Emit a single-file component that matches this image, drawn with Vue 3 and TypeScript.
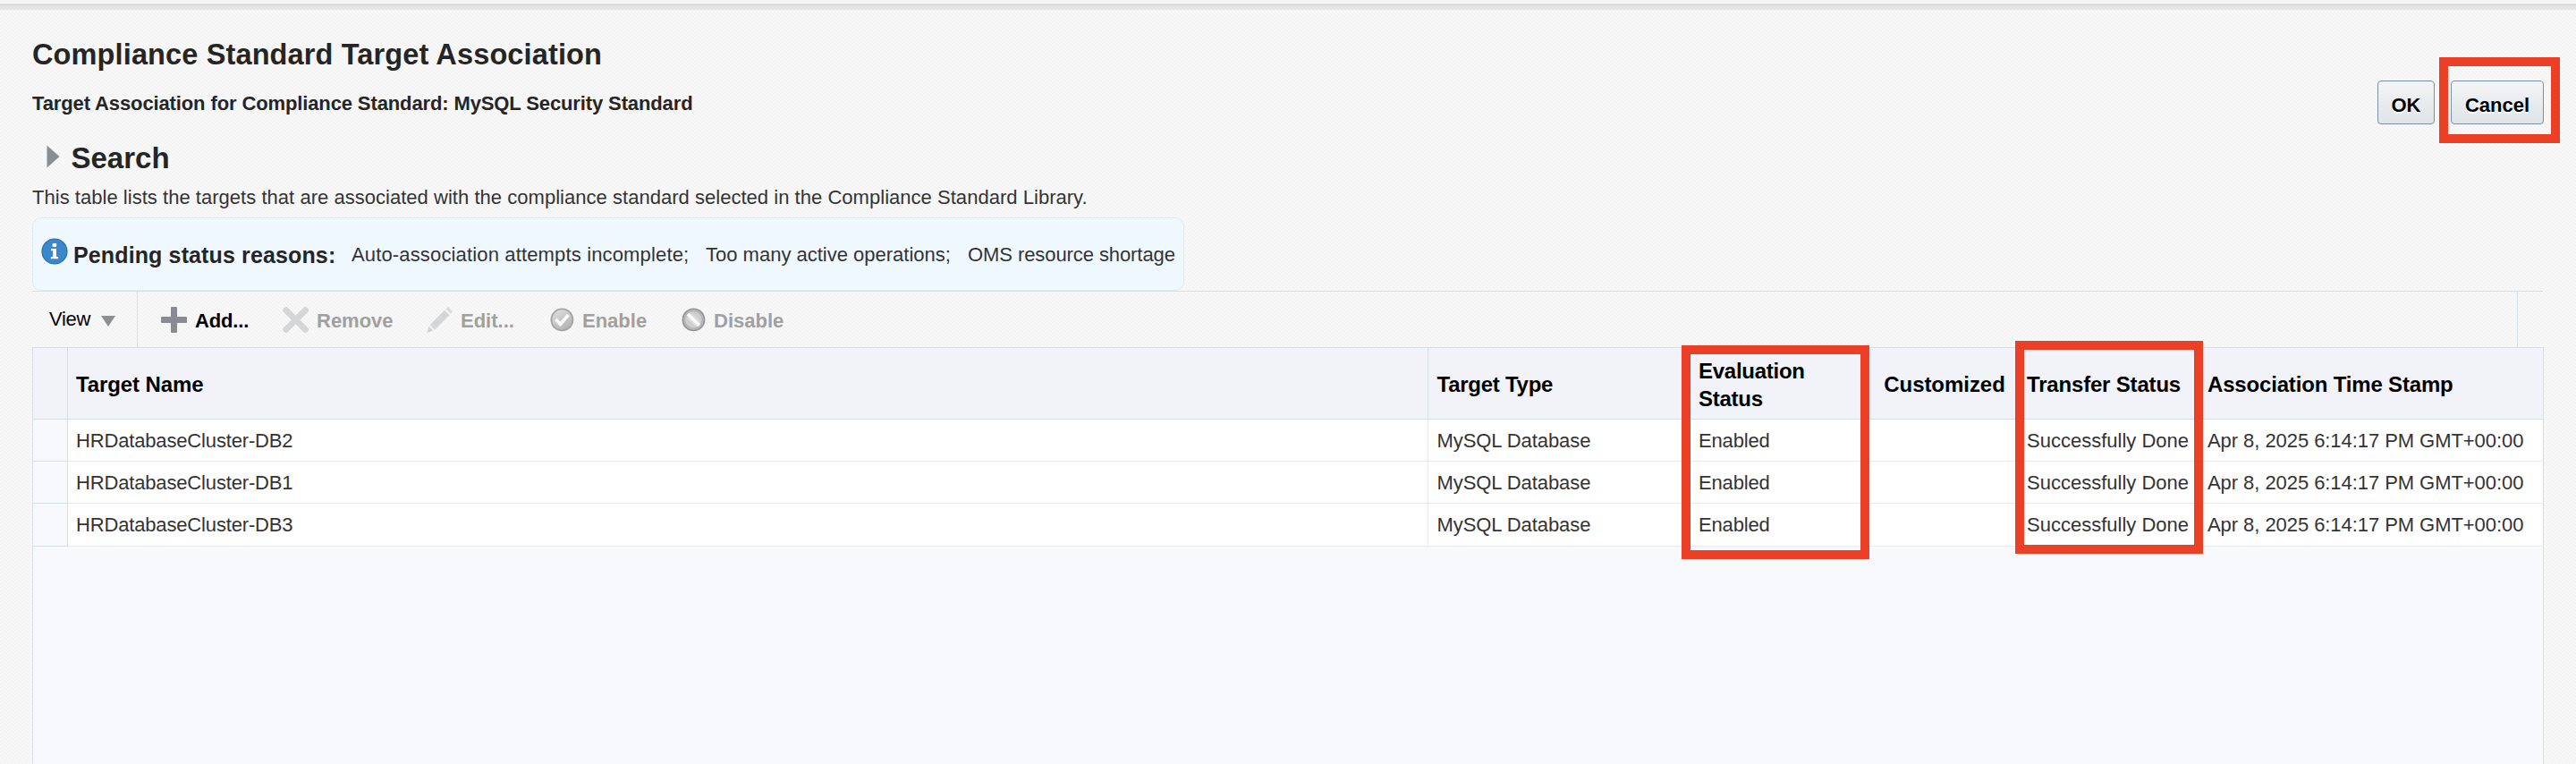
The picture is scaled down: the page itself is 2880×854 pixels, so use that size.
<script setup lang="ts">
interface Row { name: string; type: string; evaluation: string; transfer: string; stamp: string }
const stamp = 'Apr 8, 2025 6:14:17 PM GMT+00:00'
const rows: Row[] = ['DB2', 'DB1', 'DB3'].map((db) => ({
  name: `HRDatabaseCluster-${db}`,
  type: 'MySQL Database',
  evaluation: 'Enabled',
  transfer: 'Successfully Done',
  stamp,
}))
</script>

<template>
  <div class="page">
    <div class="top-edge"></div>
    <header class="head">
      <div class="titles">
        <h1 class="title">Compliance Standard Target Association</h1>
        <p class="subtitle">Target Association for Compliance Standard: MySQL Security Standard</p>
      </div>
      <div class="buttons">
        <button class="btn ok">OK</button>
        <button class="btn cancel">Cancel<span class="mark mark-cancel"></span></button>
      </div>
    </header>
    <div class="search">
      <svg class="disclose" width="15" height="26" viewBox="0 0 15 26"><path d="M0.5 0.5 14.5 13 0.5 25.5Z" fill="#8b8e91" /></svg>
      <h2 class="search-title">Search</h2>
    </div>
    <p class="intro">This table lists the targets that are associated with the compliance standard selected in the Compliance Standard Library.</p>
    <div class="notice">
      <svg class="info" width="30" height="30" viewBox="0 0 30 30">
        <circle cx="15" cy="15" r="14.6" fill="#2c6fa8" />
        <circle cx="15" cy="15" r="13.4" fill="#3a87cb" />
        <rect x="12.6" y="6" width="4.6" height="4" rx="1" fill="#fff" />
        <path d="M11 12h6v9h2.2v2.2h-8.4V21h2.3v-6.8H11z" fill="#fff" />
      </svg>
      <strong class="notice-label">Pending status reasons:</strong>
      <span class="reason r1">Auto-association attempts incomplete;</span>
      <span class="reason r2">Too many active operations;</span>
      <span class="reason r3">OMS resource shortage</span>
    </div>
    <div class="toolbar">
      <div class="view">
        <span class="view-text">View</span>
        <svg class="caret" width="16" height="12" viewBox="0 0 16 12"><path d="M0 0H16L8 12Z" fill="#8d9093" /></svg>
      </div>
      <div class="tools">
        <div class="tool add">
          <svg width="30" height="30" viewBox="0 0 30 30">
            <rect x="11" y="0" width="7" height="29" rx="1" fill="#888b8f" />
            <rect x="0" y="11" width="29" height="7" rx="1" fill="#888b8f" />
          </svg>
          <span>Add...</span>
        </div>
        <div class="tool off remove">
          <svg width="30" height="30" viewBox="0 0 30 30"><path d="M3.800 3.800 25.400 25.400M25.400 3.800 3.800 25.400" stroke="#d5d6d8" stroke-width="7" stroke-linecap="round" /></svg>
          <span>Remove</span>
        </div>
        <div class="tool off edit">
          <svg width="30" height="30" viewBox="0 0 30 30"><path d="M20 3.700 25.500 9.200 9 25.700 3.500 20.200Z" fill="#d5d6d8" /><path d="M21.500 2.300 23.200 .5Q24 0 25 .8L28.400 4.200Q29.200 5 28.500 5.900L26.800 7.800Z" fill="#dcdddf" /><path d="M2.500 21.700 7.300 26.600 .3 28.900Z" fill="#d2d3d5" /></svg>
          <span>Edit...</span>
        </div>
        <div class="tool off enable">
          <svg width="28" height="28" viewBox="0 0 28 28">
            <defs><linearGradient id="ball" x1="0" y1="0" x2="0.6" y2="1"><stop offset="0" stop-color="#e2e2e2" /><stop offset="1" stop-color="#b4b4b4" /></linearGradient></defs>
            <circle cx="14.400" cy="14.400" r="12" fill="url(#ball)" stroke="#a3a3a3" stroke-width="1.800" />
            <path d="M7.500 14 12.500 19.500 21.500 9" fill="none" stroke="#fafafa" stroke-width="3.600" />
          </svg>
          <span>Enable</span>
        </div>
        <div class="tool off disable">
          <svg width="28" height="28" viewBox="0 0 28 28">
            <circle cx="14.400" cy="14.400" r="12" fill="#cfcfcf" stroke="#949494" stroke-width="1.900" />
            <circle cx="14.400" cy="14.400" r="10" fill="none" stroke="#b4b4b4" stroke-width="1.800" />
            <path d="M8 8 20.800 20.800" stroke="#fafafa" stroke-width="4" />
            <path d="M12.500 8 20.800 16.300M8 12.500 16.300 20.800" stroke="#dedede" stroke-width="1.500" />
          </svg>
          <span>Disable</span>
        </div>
      </div>
      <div class="tool-end"></div>
    </div>
    <div class="grid">
      <div class="row header">
        <div class="gutter"></div>
        <div class="cell name">Target Name</div>
        <div class="cell type">Target Type</div>
        <div class="cell eval"><span>Evaluation<br />Status</span></div>
        <div class="cell center">Customized</div>
        <div class="cell transfer">Transfer Status</div>
        <div class="cell last">Association Time Stamp</div>
      </div>
      <div v-for="row in rows" :key="row.name" class="row body">
        <div class="gutter"></div>
        <div class="cell name">{{ row.name }}</div>
        <div class="cell type">{{ row.type }}</div>
        <div class="cell eval">{{ row.evaluation }}</div>
        <div class="cell"></div>
        <div class="cell transfer">{{ row.transfer }}</div>
        <div class="cell last">{{ row.stamp }}</div>
      </div>
      <span class="mark mark-eval"></span>
      <span class="mark mark-transfer"></span>
    </div>
  </div>
</template>

<style>
html, body { margin: 0; overflow: hidden; }
</style>

<style scoped>
* { box-sizing: border-box; }
.page {
  width: 2880px; height: 854px; overflow: hidden;
  display: flex; flex-direction: column;
  font: 22px/26px "Liberation Sans", Arial, sans-serif; color: #333; white-space: nowrap;
  background: repeating-linear-gradient(45deg, #f9f9f9 0 1.414px, #f3f3f3 1.414px 2.828px);
}
h1, h2, p { margin: 0; font-size: inherit; }
.top-edge { height: 11px; flex: none; border-top: 3px solid #f2f2f2; background: linear-gradient(#fff 0 1px, #d9d9d9 1px, #e9e9e9 100%); }
.head { height: 136px; flex: none; display: flex; justify-content: space-between; padding: 0 36px; color: #252525; }
.title { font-size: 32.5px; line-height: 36px; margin-top: 32px; letter-spacing: .13px; }
.subtitle { font-weight: bold; line-height: 26px; margin-top: 24px; letter-spacing: -.12px; }
.buttons { display: flex; gap: 18px; margin-top: 79px; }
.btn {
  position: relative; height: 49px; padding: 6px 0 0; border: 1px solid #7a8fa6; border-radius: 4px;
  background: linear-gradient(#f3f4f5, #dfe4e8); font: bold 22px/26px "Liberation Sans", Arial, sans-serif;
  color: #000; text-shadow: 0 2px 0 #fff; text-align: center;
}
.ok { width: 64px; }
.cancel { width: 104px; }
.mark { position: absolute; border: 10px solid #ec4026; pointer-events: none; }
.mark-cancel { left: -14px; top: -27px; width: 135px; height: 96px; }
.search { height: 58px; flex: none; display: flex; padding: 15px 0 0 52px; }
.search-title { font-size: 33px; line-height: 36px; margin: -3px 0 0 12.5px; color: #252525; }
.intro { height: 38px; flex: none; padding: 3px 0 0 36px; letter-spacing: .03px; }
.notice {
  margin-left: 36px; width: 1288px; height: 82px; flex: none; display: flex; align-items: flex-start;
  border: 1px solid #dfeaf0; border-radius: 10px; background: #f0f8ff; padding-left: 9px;
}
.info { margin-top: 22px; flex: none; }
.notice-label { font-size: 25px; line-height: 28px; color: #252525; margin: 27px 0 0 6px; width: 311px; flex: none; letter-spacing: .13px; }
.reason { margin-top: 28px; flex: none; }
.r1 { width: 396px; letter-spacing: .15px; }
.r2 { width: 293px; }
.r3 { letter-spacing: -.08px; }
.toolbar { margin: 0 37px 0 36px; height: 63px; flex: none; border-top: 1px solid #d6dfe6; display: flex; }
.view { width: 118px; border-right: 1px solid #d6dfe6; padding: 18px 0 0 19px; display: flex; color: #000; line-height: 26px; }
.view-text { letter-spacing: -.3px; }
.caret { margin: 9px 0 0 12px; }
.tools { flex: 1; display: flex; padding: 17px 0 0 26px; font-weight: bold; color: #000; }
.tool { display: flex; }
.tool span { line-height: 26px; margin: 3px 0 0 8px; }
.add { width: 136px; }
.add span { letter-spacing: -.15px; }
.remove { width: 161px; }
.edit { width: 137px; }
.enable { width: 147px; }
.enable span, .disable span { margin-left: 9px; }
.off { color: #a0a0a0; }
.tool-end { width: 29px; border-left: 1px solid #d6dfe6; }
.grid {
  position: relative; flex: 1; margin: 0 36px; border: 1px solid #d6dfe6; border-bottom: 0; background: #f8f9fd;
}
.row { display: grid; grid-template-columns: 39px 1521px 292px 203px 165px 201px 1fr; }
.header { height: 80px; background: #f2f3f8; color: #000; font: bold 24px/31px "Liberation Sans", Arial, sans-serif; }
.gutter { border-right: 1px solid #d6dfe6; border-bottom: 1px solid #d6dfe6; background: #f8f9fd; }
.header .gutter { background: #f2f3f8; }
.cell { display: flex; align-items: center; padding-left: 9px; border-right: 1px solid #e9ebee; border-bottom: 1px solid #e9ebee; }
.header .cell { border-color: #d6dfe6; padding-top: 2px; }
.cell.type { padding-left: 9.5px; }
.cell.eval, .cell.last { padding-left: 10px; }
.cell.last { border-right: 0; }
.header .center { justify-content: center; padding-left: 0; letter-spacing: -.05px; }
.header .name { letter-spacing: -.1px; }
.header .type { letter-spacing: -.25px; }
.header .eval { letter-spacing: -.27px; }
.header .transfer { letter-spacing: -.18px; }
.header .last { letter-spacing: -.17px; }
.body { height: 47px; background: #fff; }
.body .cell { padding-top: 2px; }
.body .name { letter-spacing: -.16px; }
.body .type { letter-spacing: -.07px; }
.body .eval { letter-spacing: -.15px; }
.body .last { letter-spacing: -.06px; }
.body:nth-child(4) { height: 48px; }
.body:nth-child(4) .cell { padding-top: 1px; }
.mark-eval { left: 1843px; top: -3px; width: 210px; height: 239px; }
.mark-transfer { left: 2216px; top: -8px; width: 210px; height: 238px; }
</style>
